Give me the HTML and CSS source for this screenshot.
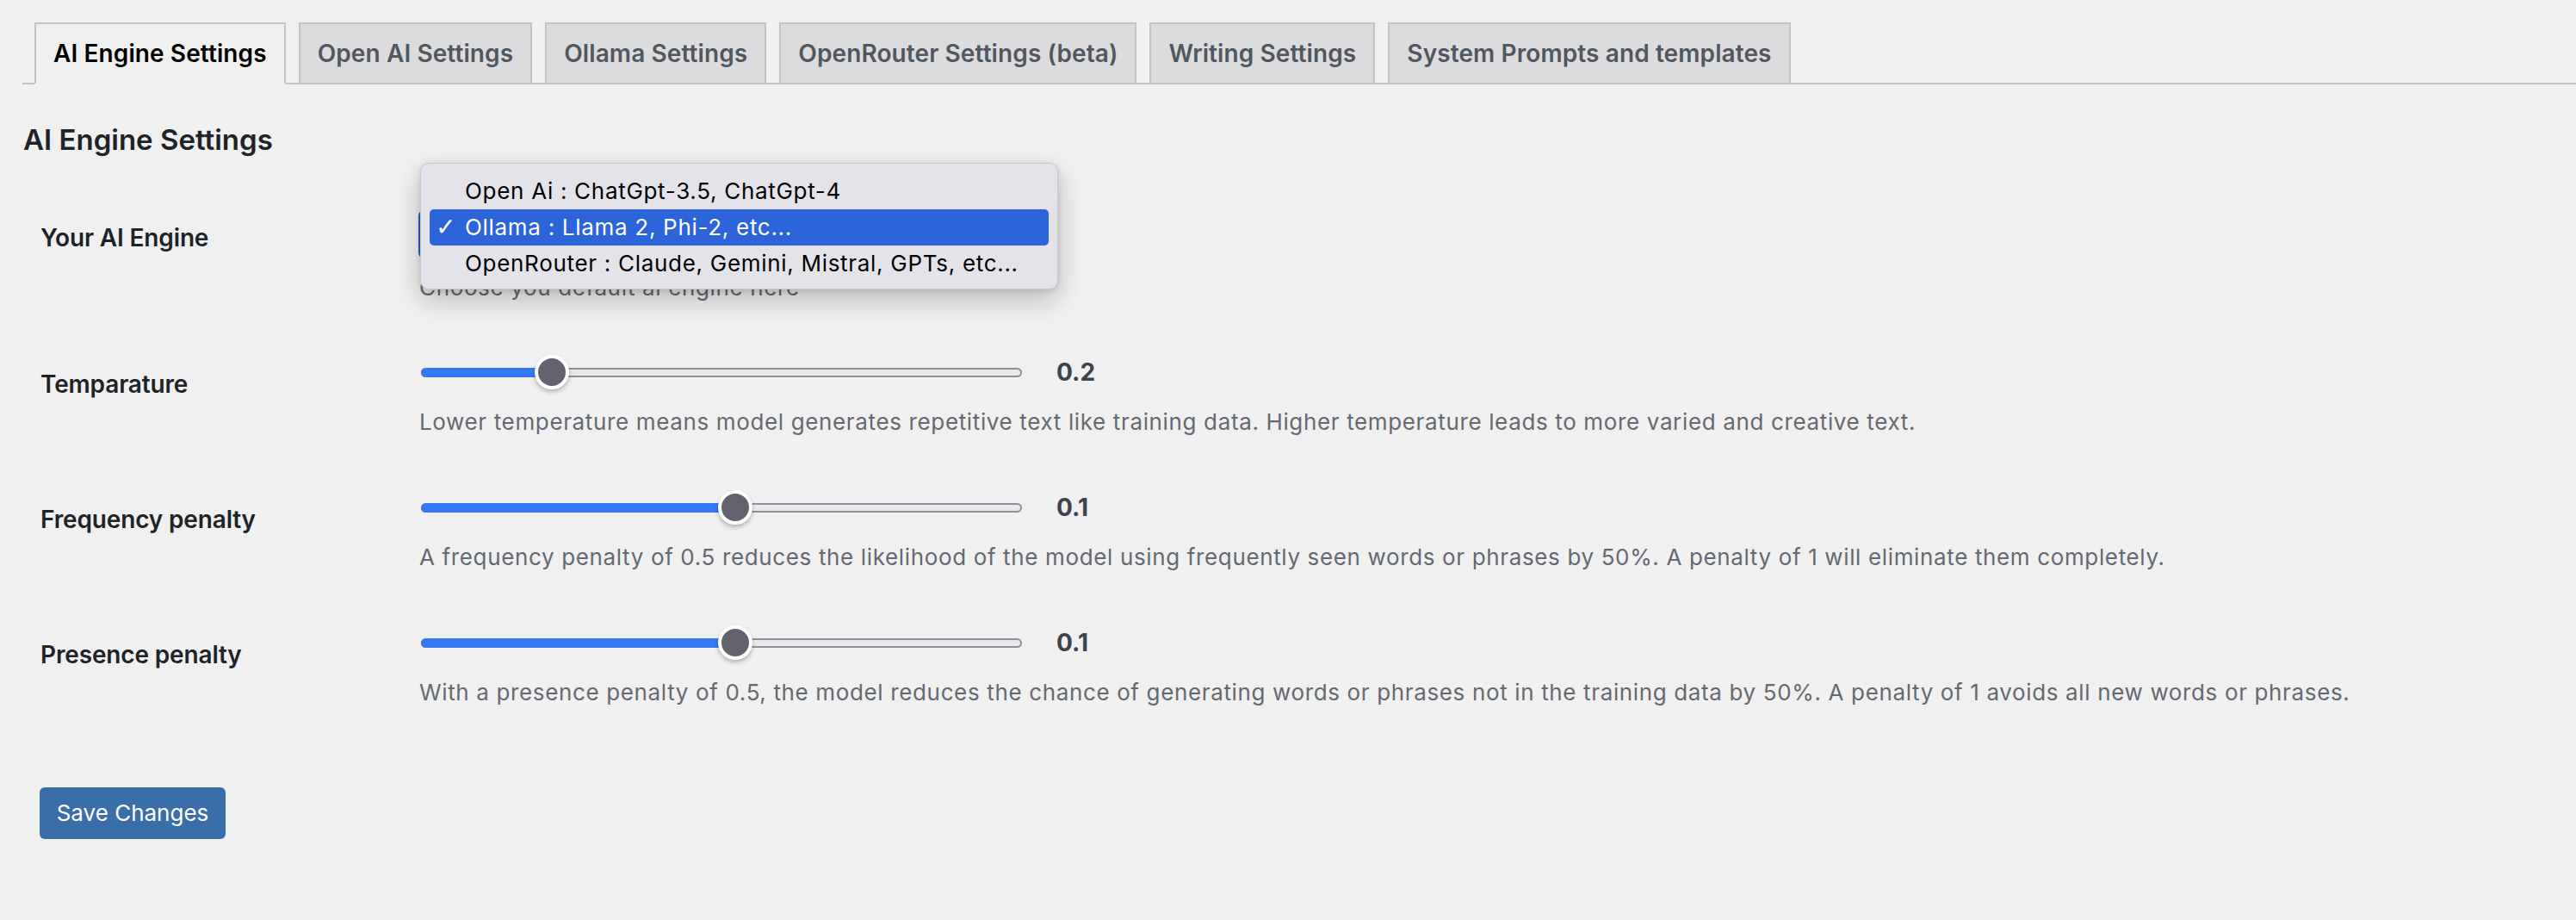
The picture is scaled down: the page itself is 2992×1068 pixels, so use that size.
FILE: index.html
```html
<!DOCTYPE html>
<html lang="en">
<head>
<meta charset="utf-8">
<title>AI Engine Settings</title>
<link rel="stylesheet" href="styles.css">
</head>
<body>
<nav class="tabs">
  <a class="tab active">AI Engine Settings</a>
  <a class="tab">Open AI Settings</a>
  <a class="tab">Ollama Settings</a>
  <a class="tab">OpenRouter Settings (beta)</a>
  <a class="tab">Writing Settings</a>
  <a class="tab">System Prompts and templates</a>
</nav>
<main class="main">
  <h2 class="title">AI Engine Settings</h2>
  <div class="form">
    <div class="row row-select">
      <div class="label">Your AI Engine</div>
      <div class="field">
        <div class="select-wrap">
          <div class="select" aria-label="Your AI Engine"></div>
          <ul class="menu">
            <li class="opt">Open Ai : ChatGpt-3.5, ChatGpt-4</li>
            <li class="opt selected"><span class="check">✓</span>Ollama : Llama 2, Phi-2, etc...</li>
            <li class="opt">OpenRouter : Claude, Gemini, Mistral, GPTs, etc...</li>
          </ul>
        </div>
        <p class="desc desc-select">Choose you default ai engine here</p>
      </div>
    </div>
    <div class="row">
      <div class="label">Temparature</div>
      <div class="field">
        <div class="slider-line">
          <div class="track" style="--v:0.2"><div class="fill"></div><div class="thumb"></div></div>
          <span class="value">0.2</span>
        </div>
        <p class="desc">Lower temperature means model generates repetitive text like training data. Higher temperature leads to more varied and creative text.</p>
      </div>
    </div>
    <div class="row">
      <div class="label">Frequency penalty</div>
      <div class="field">
        <div class="slider-line">
          <div class="track" style="--v:0.525"><div class="fill"></div><div class="thumb"></div></div>
          <span class="value">0.1</span>
        </div>
        <p class="desc">A frequency penalty of 0.5 reduces the likelihood of the model using frequently seen words or phrases by 50%. A penalty of 1 will eliminate them completely.</p>
      </div>
    </div>
    <div class="row">
      <div class="label">Presence penalty</div>
      <div class="field">
        <div class="slider-line">
          <div class="track" style="--v:0.525"><div class="fill"></div><div class="thumb"></div></div>
          <span class="value">0.1</span>
        </div>
        <p class="desc">With a presence penalty of 0.5, the model reduces the chance of generating words or phrases not in the training data by 50%. A penalty of 1 avoids all new words or phrases.</p>
      </div>
    </div>
    <div class="submit">
      <button class="button">Save Changes</button>
    </div>
  </div>
</main>
</body>
</html>
```
FILE: styles.css
```css
html, body {
  margin: 0;
  padding: 0;
  background: #f0f0f1;
}
body {
  font-family: Inter, "Noto Sans", "Liberation Sans", sans-serif;
  color: #1d2327;
  width: 2992px;
  height: 1068px;
  overflow: hidden;
}

/* Tabs */
.tabs {
  display: flex;
  gap: 15px;
  margin: 26px 0 0 26px;
  padding-left: 14px;
  border-bottom: 2px solid #c3c4c7;
  height: 70px;
  align-items: flex-start;
}
.tab {
  display: block;
  box-sizing: border-box;
  height: 72px;
  padding: 10px 20px;
  line-height: 48px;
  font-size: 28px;
  font-weight: 600;
  color: #50575e;
  background: #dcdcde;
  border: 2px solid #c3c4c7;
  white-space: nowrap;
  letter-spacing: 0.1px;
}
.tab.active {
  background: #f0f0f1;
  color: #000;
  border-bottom-color: #f0f0f1;
}

/* Main */
.main {
  padding-left: 27px;
}
.title {
  margin: 42px 0 0;
  font-size: 33px;
  line-height: 44px;
  font-weight: 600;
  color: #1d2327;
  letter-spacing: 0;
}
.form {
  margin-top: 34px;
  padding-left: 20px;
}
.row {
  display: grid;
  grid-template-columns: 440px 1fr;
}
.label {
  padding-top: 40px;
  font-size: 28px;
  line-height: 36px;
  font-weight: 600;
  color: #1d2327;
  letter-spacing: -0.15px;
}
.field {
  padding: 30px 0 37px;
}
.row-select .field {
  padding: 25px 0 36px;
}

/* Select + open menu */
.select-wrap {
  position: relative;
  width: 742px;
  height: 58px;
  margin-left: -1px;
}
.select {
  box-sizing: border-box;
  height: 58px;
  border: 2px solid #2c5fb3;
  border-radius: 8px;
  background: #fff;
}
.menu {
  position: absolute;
  left: 2px;
  top: -54px;
  width: 741px;
  height: 147px;
  box-sizing: border-box;
  margin: 0;
  padding: 11px 10px 10px;
  list-style: none;
  background: #e4e3ea;
  border: 1px solid #c9c8cf;
  border-radius: 10px;
  box-shadow: 0 12px 32px rgba(0, 0, 0, 0.22), 0 2px 6px rgba(0, 0, 0, 0.12);
  z-index: 5;
}
.opt {
  position: relative;
  height: 42px;
  line-height: 42px;
  padding-left: 41px;
  font-size: 26px;
  color: #000;
  border-radius: 5px;
  letter-spacing: 0.7px;
  white-space: nowrap;
}
.opt.selected {
  background: #2c64d9;
  color: #fff;
}
.check {
  position: absolute;
  left: 7px;
  top: 0;
  font-family: "DejaVu Sans", sans-serif;
  font-size: 28px;
  font-weight: 300;
}

/* Descriptions */
.desc {
  margin: 26px 0 0;
  font-size: 26px;
  line-height: 36px;
  color: #646970;
  white-space: nowrap;
  letter-spacing: 0.64px;
}
.desc-select {
  margin-top: 15px;
}

/* Sliders */
.slider-line {
  display: flex;
  align-items: center;
  height: 28px;
  margin-left: 2px;
}
.track {
  position: relative;
  width: 698px;
  height: 11px;
  box-sizing: border-box;
  background: #e9e8ed;
  border: 2px solid #8f8e99;
  border-radius: 6px;
}
.fill {
  position: absolute;
  left: -2px;
  top: -2px;
  height: 11px;
  width: calc(20px + var(--v) * 658px);
  background: #3478f6;
  border-radius: 6px 0 0 6px;
}
.thumb {
  position: absolute;
  top: 50%;
  left: calc(18px + var(--v) * 658px);
  width: 40px;
  height: 40px;
  box-sizing: border-box;
  margin: -20px 0 0 -20px;
  border-radius: 50%;
  background: #63636f;
  border: 4px solid #fff;
  box-shadow: 0 3px 5px rgba(0, 0, 0, 0.25);
}
.value {
  margin-left: 40px;
  font-size: 28px;
  font-weight: 700;
  color: #3c434a;
}

/* Submit */
.submit {
  padding-top: 55px;
}
.button {
  display: block;
  box-sizing: border-box;
  height: 60px;
  width: 216px;
  margin-left: -1px;
  padding: 0;
  border: 0;
  border-radius: 6px;
  background: #3a6ea9;
  color: #fff;
  font-family: inherit;
  font-size: 26px;
  line-height: 60px;
  text-align: center;
}
```
